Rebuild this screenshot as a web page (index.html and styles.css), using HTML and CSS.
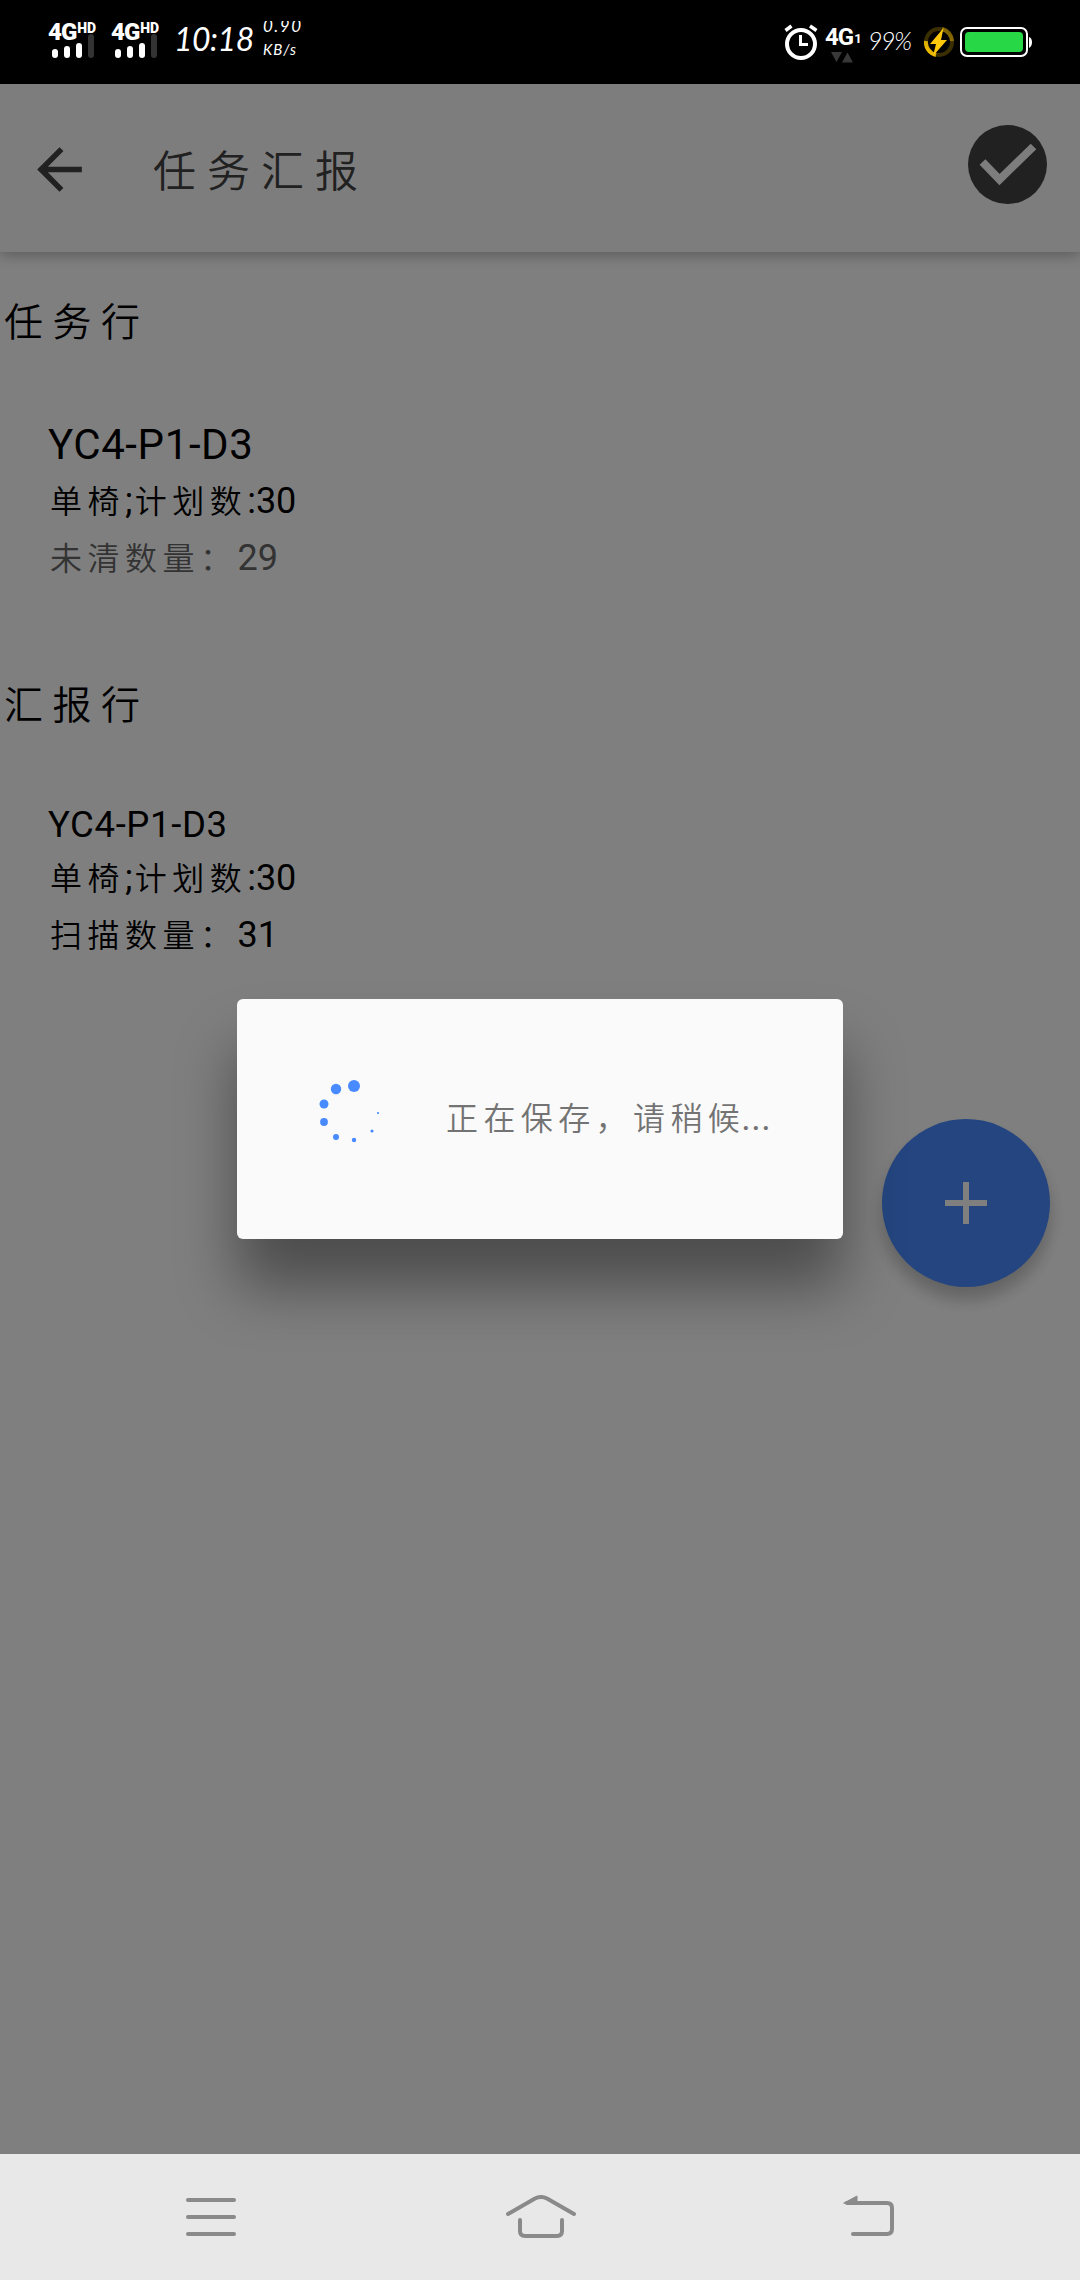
FILE: index.html
```html
<!DOCTYPE html>
<html lang="zh-CN">
<head>
<meta charset="utf-8">
<title>任务汇报</title>
<link rel="stylesheet" href="styles.css">
</head>
<body>
<div class="screen">
  <header class="status">
    <div class="signal">
      <div class="net">4G<span class="hd">HD</span></div>
      <div class="bars"><i class="b1"></i><i class="b2"></i><i class="b3"></i><i class="b4"></i></div>
    </div>
    <div class="signal">
      <div class="net">4G<span class="hd">HD</span></div>
      <div class="bars"><i class="b1"></i><i class="b2"></i><i class="b3"></i><i class="b4"></i></div>
    </div>
    <div class="clock">10:18</div>
    <div class="speed"><div class="rate">0.90</div><div class="unit">KB/s</div></div>
    <div class="spacer"></div>
    <svg class="alarm" width="34" height="36" viewBox="0 0 34 36" fill="none" stroke="#fff">
      <circle cx="17" cy="20" r="14" stroke-width="4"/>
      <path d="M16.500 11v9.500h7.500" stroke-width="3"/>
      <path d="M1.500 6.500l6-4.500M26 2l6.500 4.500" stroke-width="3.500"/>
    </svg>
    <div class="data">
      <div class="net">4G<span class="sub">1</span></div>
      <svg width="22" height="11" viewBox="0 0 22 11" fill="#383838"><path d="M0 0h11L5.500 10zM11 10.500h11L16.500 .500z"/></svg>
    </div>
    <div class="percent">99%</div>
    <svg class="charge" width="30" height="30" viewBox="0 0 30 30">
      <defs>
        <linearGradient id="ring" x1="0" y1="1" x2="1" y2="0"><stop offset="0" stop-color="#ffc800"/><stop offset="1" stop-color="#6b5400"/></linearGradient>
      </defs>
      <circle cx="15" cy="15" r="13" fill="none" stroke="#3b2f00" stroke-width="4"/>
      <path d="M12 28A13 13 0 0 1 2 14M18 2a13 13 0 0 1 10 12" fill="none" stroke="url(#ring)" stroke-width="4"/>
      <path d="M19.500 1L6 17h6l-3 12L23 13h-6z" fill="#ffc80a"/>
    </svg>
    <svg class="battery" width="72" height="30" viewBox="0 0 72 30">
      <rect x="1" y="1" width="66" height="28" rx="6" fill="none" stroke="#fff" stroke-width="2"/>
      <rect x="5" y="5" width="58" height="20" rx="4" fill="#28d745"/>
      <path d="M69 10c4 1 4 9 0 11z" fill="#fff"/>
    </svg>
  </header>

  <div class="page">
    <header class="toolbar">
      <svg class="back" width="67" height="67" viewBox="0 0 24 24" fill="#424242"><path d="M20 11H7.830l5.590-5.590L12 4l-8 8 8 8 1.410-1.410L7.830 13H20z"/></svg>
      <h1 class="title">任务汇报</h1>
      <svg class="done" width="79" height="79" viewBox="0 0 79 79"><circle cx="39.500" cy="39.500" r="39.500" fill="#424242"/><path d="M14.500 37L31.500 54.500 65.500 21.500" fill="none" stroke="#fafafa" stroke-width="8"/></svg>
    </header>
    <main class="content">
      <h2 class="heading">任务行</h2>
      <section class="item first">
        <div class="code large">YC4-P1-D3</div>
        <div class="row"><span class="han">单椅</span>;<span class="han">计划数</span>:30</div>
        <div class="row muted"><span class="han">未清数量：</span>29</div>
      </section>
      <h2 class="heading">汇报行</h2>
      <section class="item second">
        <div class="code">YC4-P1-D3</div>
        <div class="row"><span class="han">单椅</span>;<span class="han">计划数</span>:30</div>
        <div class="row"><span class="han">扫描数量：</span>31</div>
      </section>
    </main>
    <button class="fab" aria-label="添加"><svg width="42" height="42" viewBox="0 0 42 42"><path d="M21 0v42M0 21h42" stroke="#fff" stroke-width="6"/></svg></button>
    <div class="scrim">
      <div class="dialog">
        <svg class="spinner" width="64" height="64" viewBox="0 0 64 64" fill="#488aff">
          <circle cx="36" cy="8" r="6"/><circle cx="18" cy="11" r="5.200"/><circle cx="6" cy="26" r="4.500"/><circle cx="6" cy="44" r="3.900"/><circle cx="18" cy="59" r="3"/><circle cx="36" cy="62" r="2.200"/><circle cx="54" cy="53" r="1.600"/><circle cx="60" cy="35" r="1.100"/>
        </svg>
        <p class="message">正在保存，请稍候<span class="dots">...</span></p>
      </div>
    </div>
  </div>

  <nav class="nav">
    <svg width="50" height="44" viewBox="0 0 50 44"><path d="M2 5h46M2 22h46M2 39h46"/></svg>
    <svg class="home" width="72" height="44" viewBox="-1 0 72 44"><path d="M2 19L29 3.500q6-3 12 0L68 19M14 25v11q0 5 5 5h32q5 0 5-5V25"/></svg>
    <svg width="51" height="44" viewBox="0 0 51 44"><path d="M4 8h40q5 0 5 5v21q0 5-5 5H10"/><path class="tip" d="M1 8L14 1v7z"/></svg>
  </nav>
</div>
</body>
</html>
```
FILE: styles.css
```css
* { box-sizing: border-box; }
body { margin: 0; font-family: Roboto, "Noto Sans CJK SC", sans-serif; }
h1, h2, p { margin: 0; font-weight: 350; }
svg { display: block; flex: none; }
.screen { width: 1080px; height: 2280px; display: flex; flex-direction: column; overflow: hidden; }

.status { height: 84px; flex: none; background: #000; color: #fff; display: flex; align-items: flex-start; padding: 0 48px; }
.signal { width: 63px; padding-top: 21px; }
.net { display: flex; align-items: flex-start; font-weight: 900; font-size: 24px; line-height: 22px; letter-spacing: -1px; }
.hd { font-size: 14px; line-height: 14px; letter-spacing: 0; padding-left: 1px; }
.bars { display: flex; align-items: flex-end; gap: 6px; height: 34px; margin: -19px 0 0 4px; }
.bars i { width: 6px; border-radius: 3px; background: #fff; }
.bars .b1 { height: 9px; }
.bars .b2 { height: 12px; }
.bars .b3 { height: 15px; }
.bars .b4 { height: 24px; background: #333; }
.clock { width: 89px; padding-top: 18px; font: italic 400 32px/42px Lato, sans-serif; letter-spacing: -.500px; }
.speed { margin-top: 21px; height: 38px; overflow: hidden; font: italic 400 17px/18px Lato, sans-serif; }
.rate { margin-top: -4px; letter-spacing: 1.500px; }
.unit { margin-top: 5px; font-size: 15px; letter-spacing: 1px; }
.spacer { flex: 1; }
.alarm { margin-top: 24px; }
.data { width: 43px; margin: 26px 0 0 7px; }
.data .net { font-weight: 700; }
.sub { font-size: 13px; line-height: 26px; padding-left: 1px; }
.data svg { margin-left: 6px; }
.percent { width: 56px; padding-top: 24px; font: italic 300 25px/32px Lato, sans-serif; letter-spacing: -1.500px; }
.charge { margin-top: 27px; }
.battery { margin: 27px 0 0 6px; }

.page { position: relative; flex: 1; background: #fff; }
.toolbar { height: 168px; background: #fafafa; display: flex; align-items: center; padding: 2px 33px 0 26px; box-shadow: 0 3px 14px rgba(0, 0, 0, .3); }
.title { flex: 1; margin: -3px 0 0 60px; color: #424242; font-size: 43px; letter-spacing: 11px; }
.done { margin-bottom: 9px; }
.content { padding-top: 41px; color: #000; }
.heading { height: 60px; line-height: 60px; padding-left: 4px; font-size: 39px; letter-spacing: 9.500px; }
.item { padding-left: 48px; }
.first { margin: 64px 0 89px; }
.second { margin-top: 62px; }
.code { height: 52px; line-height: 53px; font-size: 36.500px; letter-spacing: .650px; }
.code.large { height: 56px; line-height: 56px; font-size: 42px; letter-spacing: .600px; }
.row { height: 57px; line-height: 57px; font-size: 36px; white-space: nowrap; }
.han { padding-left: 2px; font-size: 32px; line-height: 0; letter-spacing: 5.500px; font-weight: 350; }
.muted { color: #666; }
.fab { position: absolute; right: 30px; top: 1035px; width: 168px; height: 168px; border: 0; padding: 0; border-radius: 50%; background: #488aff; display: flex; align-items: center; justify-content: center; box-shadow: 0 12px 18px rgba(0, 0, 0, .14), 0 12px 15px rgba(0, 0, 0, .1); }
.scrim { position: absolute; inset: 0; background: rgba(0, 0, 0, .5); display: flex; justify-content: center; align-items: flex-start; padding-top: 915px; }
.dialog { width: 606px; height: 240px; border-radius: 6px; background: #fafafa; display: flex; align-items: center; padding-left: 81px; box-shadow: 0 48px 60px rgba(0, 0, 0, .4); }
.spinner { margin-bottom: 18px; overflow: visible; }
.message { margin: -6px 0 0 64px; color: #737373; font-size: 32px; letter-spacing: 5.400px; white-space: nowrap; }
.dots { margin-left: -4px; font-size: 36px; letter-spacing: .500px; font-weight: 400; }

.nav { height: 126px; flex: none; background: #e8e8e8; display: flex; align-items: center; justify-content: space-between; padding: 0 186px; }
.nav path { fill: none; stroke: #8a8a8a; stroke-width: 4; stroke-linecap: round; stroke-linejoin: round; }
.nav .home { transform: translateX(1px); }
.nav .tip { fill: #8a8a8a; stroke-width: 1; }
```
